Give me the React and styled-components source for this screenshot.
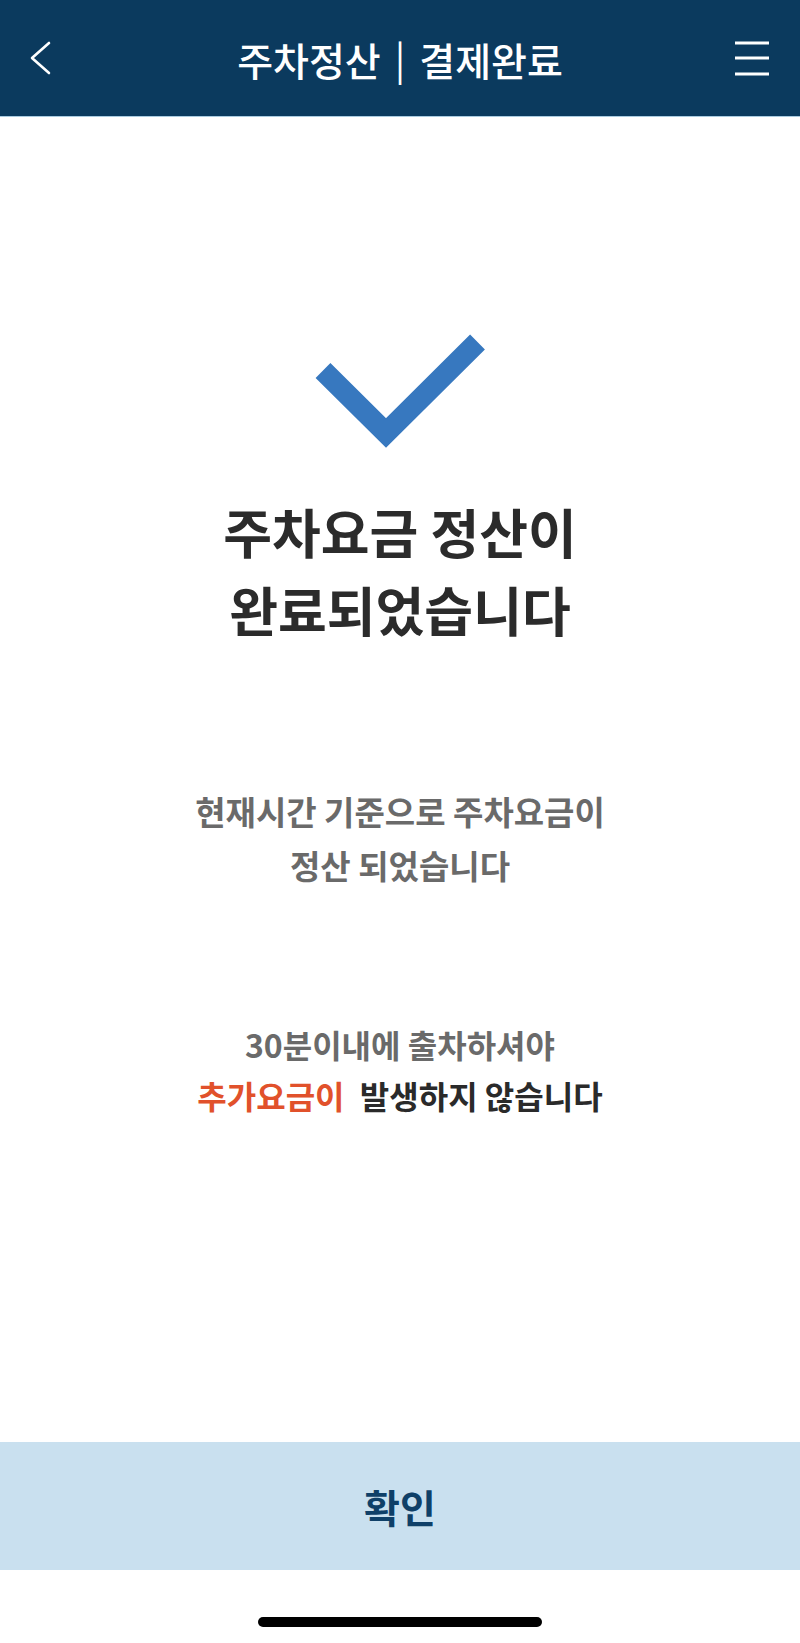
import styled, { createGlobalStyle } from "styled-components";

const GlobalStyle = createGlobalStyle`
  html, body {
    margin: 0;
    padding: 0;
    background: #ffffff;
  }
  body {
    font-family: "Noto Sans CJK KR", "Noto Sans", sans-serif;
  }
`;

const Screen = styled.div`
  width: 800px;
  height: 1643px;
  display: flex;
  flex-direction: column;
  background: #ffffff;
  overflow: hidden;
`;

const Header = styled.header`
  height: 116px;
  flex-shrink: 0;
  background: #0b3a5e;
  border-bottom: 1px solid #a9cbe0;
  display: grid;
  grid-template-columns: 80px 1fr 80px;
  align-items: center;
  color: #ffffff;
`;

const IconButton = styled.button`
  border: none;
  background: none;
  padding: 0;
  height: 100%;
  display: flex;
  align-items: center;
  justify-content: ${(props) => (props.right ? "flex-end" : "flex-start")};
  padding-left: ${(props) => (props.right ? "0" : "28px")};
  padding-right: ${(props) => (props.right ? "30px" : "0")};
  cursor: pointer;
`;

const Title = styled.h1`
  margin: 0;
  display: flex;
  justify-content: center;
  align-items: center;
  font-size: 39px;
  font-weight: 500;
  line-height: 1;
  padding-top: 2px;
`;

const Divider = styled.span`
  font-weight: 400;
  margin: 0 14px;
  padding-bottom: 4px;
`;

const Content = styled.main`
  flex: 1;
  display: flex;
  flex-direction: column;
  align-items: center;
  padding-top: 204px;
`;

const CheckMark = styled.svg`
  width: 200px;
  height: 140px;
  display: block;
`;

const Heading = styled.h2`
  margin: 31px 0 0;
  font-size: 53px;
  font-weight: 700;
  line-height: 78px;
  color: #2b2b2b;
  text-align: center;
`;

const Message = styled.p`
  margin: ${(props) => props.gap}px 0 0;
  font-size: 33px;
  font-weight: 700;
  line-height: ${(props) => props.lh}px;
  color: #6a6a6a;
  text-align: center;
`;

const Line = styled.span`
  display: block;
  font-size: ${(props) => props.size}px;
`;

const Accent = styled.span`
  color: #e1512b;
  margin-right: 8px;
`;

const Dark = styled.span`
  color: #2a2a2a;
`;

const ConfirmButton = styled.button`
  height: 128px;
  flex-shrink: 0;
  border: none;
  background: #c9e0ef;
  color: #0f4068;
  font-family: "Noto Sans CJK KR", "Noto Sans", sans-serif;
  font-size: 39px;
  font-weight: 700;
  cursor: pointer;
`;

const Footer = styled.div`
  height: 73px;
  flex-shrink: 0;
  display: flex;
  justify-content: center;
  padding-top: 47px;
  box-sizing: border-box;
`;

const HomeBar = styled.div`
  width: 284px;
  height: 10px;
  border-radius: 5px;
  background: #000000;
`;

export default function App() {
  return (
    <>
      <GlobalStyle />
      <Screen>
        <Header>
          <IconButton aria-label="뒤로">
            <svg width="24" height="34" viewBox="0 0 24 34">
              <path
                d="M21 2 L4 17 L21 32"
                fill="none"
                stroke="#ffffff"
                strokeWidth="2.6"
                strokeLinecap="round"
                strokeLinejoin="round"
              />
            </svg>
          </IconButton>
          <Title>
            주차정산<Divider>|</Divider>결제완료
          </Title>
          <IconButton right aria-label="메뉴">
            <svg width="36" height="36" viewBox="0 0 36 36">
              <g stroke="#ffffff" strokeWidth="2.8">
                <line x1="1" y1="3" x2="35" y2="3" />
                <line x1="1" y1="18" x2="35" y2="18" />
                <line x1="1" y1="34" x2="35" y2="34" />
              </g>
            </svg>
          </IconButton>
        </Header>

        <Content>
          <CheckMark viewBox="0 0 200 140">
            <path
              d="M23 49.5 L86 112 L177.5 21"
              fill="none"
              stroke="#3778bf"
              strokeWidth="21"
              strokeLinecap="butt"
              strokeLinejoin="miter"
            />
          </CheckMark>

          <Heading>
            주차요금 정산이
            <br />
            완료되었습니다
          </Heading>

          <Message gap={136} lh={54}>
            현재시간 기준으로 주차요금이
            <br />
            정산 되었습니다
          </Message>

          <Message gap={127} lh={51}>
            <Line size={32}>30분이내에 출차하셔야</Line>
            <Line size={32}>
              <Accent>추가요금이</Accent> <Dark>발생하지 않습니다</Dark>
            </Line>
          </Message>
        </Content>

        <ConfirmButton>확인</ConfirmButton>

        <Footer>
          <HomeBar />
        </Footer>
      </Screen>
    </>
  );
}
